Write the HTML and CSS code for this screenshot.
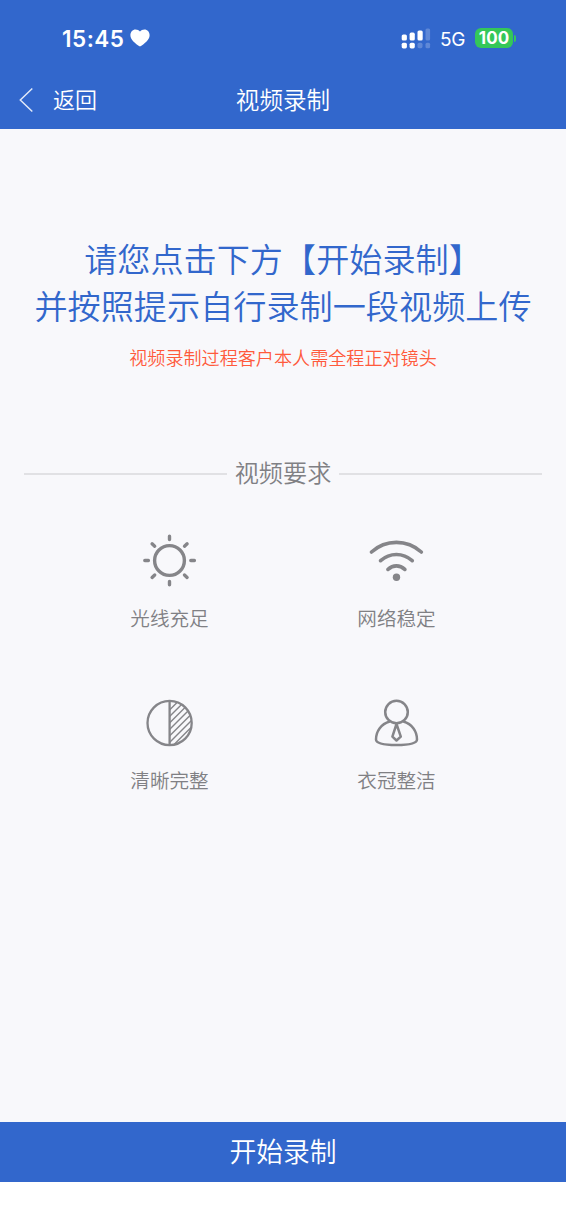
FILE: index.html
```html
<!DOCTYPE html>
<html lang="zh-CN">
	<head>
		<meta charset="UTF-8" />
		<meta name="viewport" content="width=device-width, initial-scale=1.0" />
		<title>视频录制</title>
		<link rel="stylesheet" href="styles.css">
	</head>
	<body>
		<header class="header">
			<div class="status-bar">
				<div class="status-left">
					<span class="time">15:45</span>
					<svg class="heart" width="20" height="18" viewBox="0 0 20 18" fill="#fff">
						<path d="M10 17.6C5.2 14.4.4 10.8.4 6.2.4 2.8 2.7.4 5.5.4 7.4.4 9 1.3 10 2.6 11 1.3 12.6.4 14.5.4 17.3.4 19.6 2.8 19.6 6.2 19.6 10.8 14.8 14.4 10 17.6Z" />
					</svg>
				</div>
				<div class="status-right">
					<svg class="signal" width="30" height="21" viewBox="0 0 30 21" fill="#fff">
						<rect x="0.7" y="6.5" width="5.2" height="6" rx="1.6" />
						<rect x="8.6" y="4.6" width="5.2" height="7.9" rx="1.6" />
						<rect x="16.5" y="2.4" width="5.2" height="10.1" rx="1.6" />
						<rect x="24.5" y="0.5" width="4.6" height="12" rx="1.5" opacity="0.22" />
						<rect x="0.7" y="14.7" width="5.2" height="5.7" rx="1.6" />
						<rect x="8.6" y="14.7" width="5.2" height="5.7" rx="1.6" />
						<rect x="16.5" y="14.7" width="5" height="5.5" rx="1.6" opacity="0.22" />
						<rect x="24.5" y="14.7" width="4.6" height="5.5" rx="1.5" opacity="0.22" />
					</svg>
					<span class="network">5G</span>
					<span class="battery">100</span>
					<span class="battery-cap"></span>
				</div>
			</div>
			<nav class="nav-bar">
				<a class="back">
					<svg width="16" height="26" viewBox="0 0 16 26" fill="none" stroke="#fff" stroke-opacity="0.85" stroke-width="1.5">
						<path d="M13.3 1.5 1.3 13 13.3 24.5" />
					</svg>
					<span class="back-text">返回</span>
				</a>
				<h1 class="nav-title">视频录制</h1>
			</nav>
		</header>

		<main class="content">
			<p class="guide">请您点击下方【开始录制】<br />并按照提示自行录制一段视频上传</p>
			<p class="notice">视频录制过程客户本人需全程正对镜头</p>

			<h2 class="section-title">视频要求</h2>

			<ul class="requirements">
				<li class="item">
					<svg width="56" height="56" viewBox="0.5 0.5 56 56" fill="none" stroke="#858589" stroke-width="3.4" stroke-linecap="round">
						<circle cx="28" cy="28" r="14.9" />
						<path d="M28 3.8v3.2M28 49v3.2M3.3 28h3.6M49.3 28h3.6M10.6 11.3l2.6 2.4M45.6 11.3l-2.6 2.4M10.6 44.9l2.6-2.4M45.6 44.9l-2.6-2.4" />
					</svg>
					<span>光线充足</span>
				</li>
				<li class="item">
					<svg width="56" height="56" viewBox="0.7 0.5 56 56" fill="none" stroke="#858589" stroke-width="3.6" stroke-linecap="round">
						<path d="M3.2 19.5C17.5 6.7 38.7 6.7 53 19.5M12.3 28.2C21.6 20 34.6 20 43.9 28.2M19.7 36.9C24.6 32.2 31.6 32.2 36.5 36.900" />
						<circle cx="28.2" cy="44.8" r="3.7" fill="#858589" stroke="none" />
					</svg>
					<span>网络稳定</span>
				</li>
				<li class="item">
					<svg width="56" height="56" viewBox="0.4 0 56 56" fill="none" stroke="#858589" stroke-width="2.3">
						<defs>
							<clipPath id="half">
								<path d="M28 6a22 22 0 0 1 0 44z" />
							</clipPath>
						</defs>
						<circle cx="28" cy="28" r="22.1" />
						<path d="M28 6v44" />
						<path clip-path="url(#half)" stroke-width="1.4" d="M26 17 42 1M26 23.5 48 1.5M26 30 50 6M26 36.5 54 8.5M26 43 54 15M26 49.5 54 21.5M26 56 54 28M32 56.5 56 32.5" />
					</svg>
					<span>清晰完整</span>
				</li>
				<li class="item">
					<svg width="56" height="56" viewBox="0.7 0 56 56" fill="none" stroke="#858589" stroke-width="2.5" stroke-linejoin="round">
						<circle cx="28.2" cy="17" r="11.3" />
						<path d="M21.5 26.5C12.5 29 7.7 36.5 7.7 44.5 7.7 48 15 50 28.2 50S48.7 48 48.7 44.5C48.7 36.5 44 29 35 26.5" />
						<path d="M28.2 29 24.1 41.6 28.2 45.5 32.5 41.6Z" />
					</svg>
					<span>衣冠整洁</span>
				</li>
			</ul>
		</main>

		<footer class="footer">
			<button class="start-button">开始录制</button>
		</footer>
	</body>
</html>
```
FILE: styles.css
```css
* {
	box-sizing: border-box;
}
body {
	margin: 0;
	height: 1227px;
	display: flex;
	flex-direction: column;
	font-family: 'Liberation Sans', 'Noto Sans CJK SC DemiLight', 'Noto Sans CJK SC', sans-serif;
	font-weight: 350;
	background-color: #fff;
}
.header {
	height: 129px;
	background-color: #3267cc;
	color: #fff;
}
.status-bar {
	height: 72px;
	padding: 4px 50px 0 62px;
	display: flex;
	justify-content: space-between;
	align-items: center;
}
.status-left,
.status-right {
	display: flex;
	align-items: center;
}
.time {
	font-family: Inter, sans-serif;
	font-size: 22.5px;
	font-weight: 600;
	width: 63px;
	letter-spacing: 0.5px;
	line-height: 28px;
	padding-top: 1px;
	white-space: nowrap;
}
.heart {
	margin-left: 5px;
}
.network {
	margin-left: 9px;
	padding-top: 2px;
	width: 26px;
	font-family: Inter, sans-serif;
	font-size: 19px;
	font-weight: 400;
	letter-spacing: -0.3px;
}
.battery {
	margin-left: 9px;
	width: 38px;
	height: 20px;
	border-radius: 6px;
	background-color: #34c759;
	font-family: Inter, sans-serif;
	font-size: 17px;
	font-weight: 700;
	line-height: 20px;
	text-align: center;
}
.battery-cap {
	margin-left: 1px;
	width: 2px;
	height: 7px;
	border-radius: 0 2px 2px 0;
	background-color: #34c759;
}
.nav-bar {
	height: 56px;
	padding: 0 19px;
	display: grid;
	grid-template-columns: 1fr auto 1fr;
	align-items: center;
}
.back {
	display: flex;
	align-items: center;
	gap: 18px;
	font-size: 22px;
}
.back-text {
	padding-bottom: 4px;
}
.nav-title {
	margin: 0;
	padding-bottom: 2px;
	font-size: 23.6px;
	font-weight: inherit;
}
.content {
	flex: 1;
	padding: 108px 24px 0;
	background-color: #f8f8fb;
}
.guide {
	margin: 0 -24px;
	font-size: 33.15px;
	line-height: 47px;
	text-align: center;
	color: #3267cc;
}
.notice {
	margin: 15px 0 0;
	font-size: 18.1px;
	line-height: 26px;
	text-align: center;
	color: #ff5a3c;
}
.section-title {
	margin: 84px 0 0;
	display: flex;
	align-items: center;
	gap: 8px;
	font-size: 24.2px;
	font-weight: inherit;
	line-height: 36px;
	color: #808084;
}
.section-title::before,
.section-title::after {
	content: '';
	flex: 1;
	height: 2px;
	background-color: #e1e1e4;
}
.requirements {
	list-style: none;
	margin: 41px 32px 0;
	padding: 0;
	display: grid;
	grid-template-columns: 1fr 1fr;
	row-gap: 61px;
}
.item {
	display: flex;
	flex-direction: column;
	align-items: center;
	gap: 16px;
	font-size: 19.6px;
	line-height: 29px;
	color: #808084;
}
.footer {
	height: 105px;
}
.start-button {
	display: block;
	width: 100%;
	height: 60px;
	padding: 0 0 4px;
	border: none;
	background-color: #3267cc;
	color: #fff;
	font-family: inherit;
	font-size: 26.8px;
	font-weight: inherit;
}
```
